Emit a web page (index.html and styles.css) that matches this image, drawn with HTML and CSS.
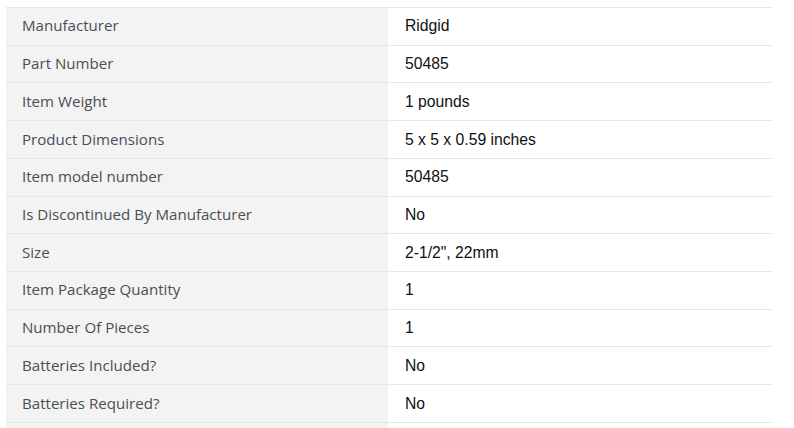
FILE: index.html
```html
<!DOCTYPE html>
<html lang="en">
<head>
<meta charset="utf-8">
<title>Product details</title>
<link rel="stylesheet" href="styles.css">
</head>
<body>
<table class="specs">
  <tbody>
    <tr><th>Manufacturer</th><td>Ridgid</td></tr>
    <tr><th>Part Number</th><td>50485</td></tr>
    <tr><th>Item Weight</th><td>1 pounds</td></tr>
    <tr><th>Product Dimensions</th><td>5 x 5 x 0.59 inches</td></tr>
    <tr><th>Item model number</th><td>50485</td></tr>
    <tr><th>Is Discontinued By Manufacturer</th><td>No</td></tr>
    <tr><th>Size</th><td>2-1/2", 22mm</td></tr>
    <tr><th>Item Package Quantity</th><td>1</td></tr>
    <tr><th>Number Of Pieces</th><td>1</td></tr>
    <tr><th>Batteries Included?</th><td>No</td></tr>
    <tr><th>Batteries Required?</th><td>No</td></tr>
    <tr class="more"><th></th><td></td></tr>
  </tbody>
</table>
</body>
</html>
```
FILE: styles.css
```css
html, body {
  margin: 0;
  padding: 0;
  background: #ffffff;
  overflow: hidden;
}
body {
  padding: 7px 0 0 6px;
}
.specs {
  width: 766px;
  border-collapse: collapse;
  table-layout: fixed;
  border-top: 1px solid #e7e7e7;
}
.specs tr {
  height: 37.73px;
  border-bottom: 1px solid #e7e7e7;
}
.specs th {
  width: 382px;
  box-sizing: border-box;
  background: #f3f3f3;
  text-align: left;
  font-weight: normal;
  padding: 0 16px 2px;
  font-family: "Open Sans", "Liberation Sans", sans-serif;
  font-size: 15.1px;
  color: #4a4e54;
  vertical-align: middle;
}
.specs td {
  padding: 0 17px;
  font-family: "Liberation Sans", Arial, sans-serif;
  font-size: 15.7px;
  color: #0f1111;
  vertical-align: middle;
}
```
